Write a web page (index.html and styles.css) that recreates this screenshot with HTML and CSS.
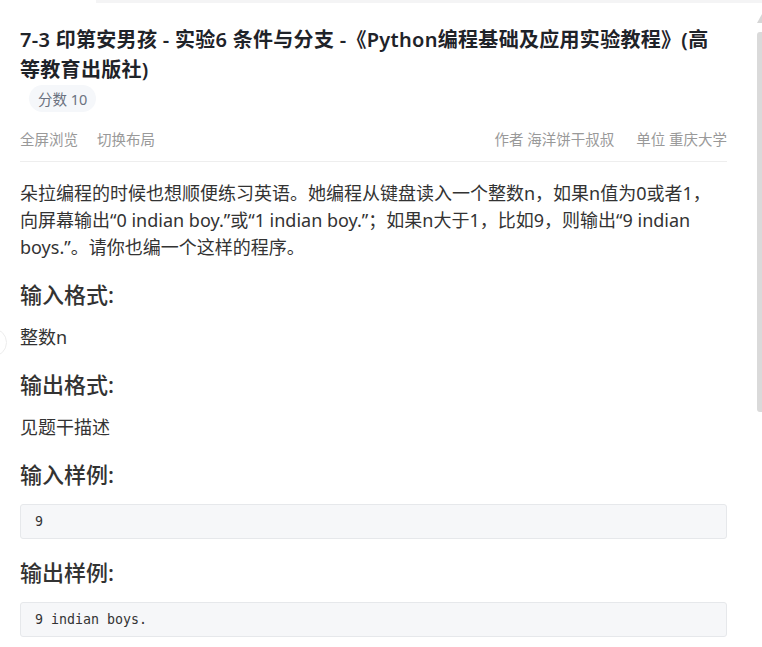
FILE: index.html
```html
<!DOCTYPE html>
<html lang="zh-CN">
<head>
<meta charset="utf-8">
<title>7-3 印第安男孩</title>
<link rel="stylesheet" href="styles.css">
</head>
<body>
<div class="topstrip"></div>
<main class="problem">
  <h1 class="title">7-3 印第安男孩 - 实验6 条件与分支 -《Python编程基础及应用实验教程》(高等教育出版社)</h1>
  <div class="badges"><span class="badge">分数 10</span></div>
  <div class="meta">
    <div class="meta-left"><span>全屏浏览</span><span>切换布局</span></div>
    <div class="meta-right"><span>作者 海洋饼干叔叔</span><span>单位 重庆大学</span></div>
  </div>
  <p class="text first">朵拉编程的时候也想顺便练习英语。她编程从键盘读入一个整数n，如果n值为0或者1，向屏幕输出“0 indian boy.”或“1 indian boy.”；如果n大于1，比如9，则输出“9 indian boys.”。请你也编一个这样的程序。</p>
  <h3 class="heading">输入格式:</h3>
  <p class="text">整数n</p>
  <h3 class="heading">输出格式:</h3>
  <p class="text">见题干描述</p>
  <h3 class="heading">输入样例:</h3>
  <pre class="code">9</pre>
  <h3 class="heading">输出样例:</h3>
  <pre class="code">9 indian boys.</pre>
</main>
<div class="scroll-arrow"></div>
<div class="scroll-thumb"></div>
<div class="side-circle"></div>
</body>
</html>
```

FILE: styles.css
```css
html, body {
  margin: 0;
  padding: 0;
  background: #ffffff;
}
body {
  font-family: "Noto Sans", "Noto Sans CJK SC", sans-serif;
  color: #333333;
  overflow: hidden;
}
.topstrip {
  height: 3px;
  margin-left: 96px;
  background: #f4f4f5;
}
.problem {
  padding: 0 35px 0 20px;
}
.title {
  margin: 22px 0 0;
  font-size: 20px;
  line-height: 30px;
  font-weight: 600;
  letter-spacing: 0.3px;
  color: #1f2329;
}
.badges {
  display: flex;
  padding-left: 9px;
}
.badge {
  display: inline-flex;
  align-items: center;
  height: 27px;
  padding: 0 9px;
  border-radius: 14px;
  background: #f5f7fa;
  color: #6b7280;
  font-size: 14.5px;
}
.meta {
  display: flex;
  justify-content: space-between;
  margin-top: 15px;
  padding-bottom: 10px;
  border-bottom: 1px solid #eeeeee;
  font-size: 14.5px;
  line-height: 24px;
  color: #999999;
}
.meta-left, .meta-right {
  display: flex;
  gap: 19px;
}
.meta-right {
  gap: 22px;
}
.text {
  margin: 0;
  font-size: 18px;
  line-height: 27px;
  color: #333333;
}
.text.first {
  margin-top: 18px;
}
.heading {
  margin: 18px 0 15px;
  font-size: 22px;
  line-height: 30px;
  font-weight: 500;
  color: #333333;
}
.code {
  margin: 0;
  height: 35px;
  box-sizing: border-box;
  padding: 0 14px;
  display: flex;
  align-items: center;
  background: #f6f7f9;
  border: 1px solid #e6e8eb;
  border-radius: 3px;
  font-family: "DejaVu Sans Mono", "Liberation Mono", monospace;
  font-size: 13.3px;
  color: #333333;
}
.scroll-arrow {
  position: fixed;
  right: 0;
  top: 14px;
  width: 0;
  height: 0;
  border-left: 5px solid transparent;
  border-bottom: 9px solid #d6d6d6;
}
.scroll-thumb {
  position: fixed;
  right: 0;
  top: 32px;
  width: 5px;
  height: 380px;
  background: #dadada;
  border-radius: 3px 0 0 3px;
}
.side-circle {
  position: fixed;
  left: -22px;
  top: 328px;
  width: 27px;
  height: 27px;
  border: 1px solid #ececec;
  border-radius: 50%;
}
```
